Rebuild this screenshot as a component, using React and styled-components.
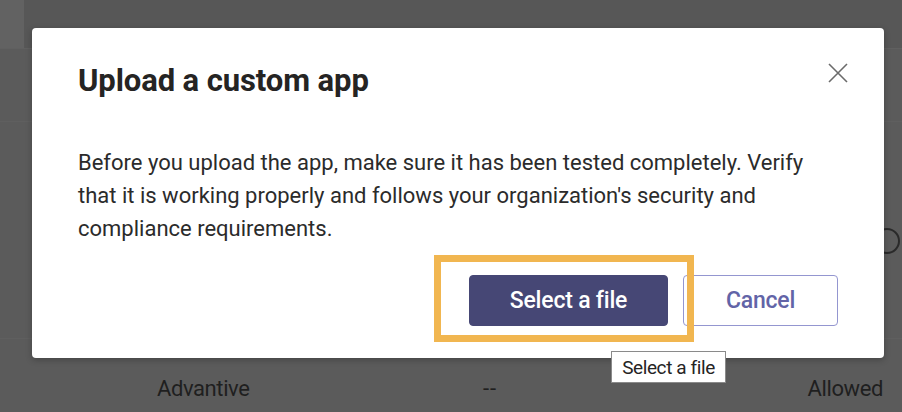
import React from "react";
import styled, { createGlobalStyle } from "styled-components";

const Global = createGlobalStyle`
  html, body { margin: 0; padding: 0; }
  body {
    width: 902px;
    height: 412px;
    overflow: hidden;
    background: #5b5b5b;
    font-family: Roboto, "Open Sans", sans-serif;
  }
`;

const Page = styled.div`
  position: relative;
  width: 902px;
  height: 412px;
  background: #5b5b5b;
  overflow: hidden;
`;

const Table = styled.div`
  display: flex;
  flex-direction: column;
  height: 100%;
`;

const TopStrip = styled.div`
  height: 48px;
  flex-shrink: 0;
  display: grid;
  grid-template-columns: 24px 1fr;
  border-bottom: 1px solid #606060;
`;

const StripCell = styled.div`
  background: ${(p) => (p.$light ? "#626262" : "#575757")};
`;

const TableRow = styled.div`
  height: ${(p) => p.$h}px;
  flex-shrink: 0;
  box-sizing: border-box;
  display: grid;
  grid-template-columns: 326px 1fr auto;
  padding: 0 19px 0 157px;
  align-items: center;
  color: #1f1f1f;
  font-size: 22px;
  border-bottom: ${(p) => (p.$line ? "1px solid #5f5f5f" : "none")};
`;

const Cell = styled.div`
  white-space: nowrap;
  letter-spacing: ${(p) => (p.$wide ? "1px" : "-0.4px")};
  font-variant-ligatures: none;
`;

const Ring = styled.div`
  grid-column: 3;
  margin-right: -17px;
  width: 22px;
  height: 22px;
  border: 2px solid #2a2a2a;
  border-radius: 50%;
`;

const Overlay = styled.div`
  position: absolute;
  inset: 0;
  padding: 28px 18px 0 32px;
  box-sizing: border-box;
`;

const Dialog = styled.div`
  width: 852px;
  height: 330px;
  box-sizing: border-box;
  background: #ffffff;
  border-radius: 4px;
  padding: 30px 46px 32px 46px;
  display: flex;
  flex-direction: column;
  box-shadow: 0 2px 6px rgba(0, 0, 0, 0.25);
`;

const Header = styled.div`
  display: flex;
  justify-content: space-between;
  align-items: flex-start;
`;

const Title = styled.h1`
  margin: 0;
  font-size: 31px;
  line-height: 46px;
  font-weight: 700;
  color: #252423;
  letter-spacing: -0.1px;
`;

const CloseButton = styled.button`
  border: none;
  background: none;
  padding: 0;
  margin: 4px -11px 0 0;
  width: 22px;
  height: 22px;
  display: flex;
  align-items: center;
  justify-content: center;
  cursor: pointer;
`;

const Body = styled.p`
  margin: 42px 0 0 0;
  font-size: 22px;
  line-height: 33px;
  color: #2b2b2b;
  letter-spacing: 0;
  width: 750px;
`;

const Footer = styled.div`
  margin-top: auto;
  display: flex;
  justify-content: flex-end;
  gap: 15px;
`;

const ButtonWrap = styled.div`
  position: relative;
  display: flex;
`;

const Button = styled.button`
  height: 51px;
  width: ${(p) => p.$w}px;
  box-sizing: border-box;
  border-radius: 4px;
  font-family: Roboto, "Open Sans", sans-serif;
  font-size: 23px;
  font-weight: 500;
  letter-spacing: -0.2px;
  cursor: pointer;
  background: ${(p) => (p.$primary ? "#464775" : "#ffffff")};
  color: ${(p) => (p.$primary ? "#ffffff" : "#6264a7")};
  border: 1.5px solid ${(p) => (p.$primary ? "#464775" : "#9496d0")};
`;

const Highlight = styled.div`
  position: absolute;
  left: -35px;
  top: -20px;
  right: -26px;
  bottom: -16px;
  border: 7px solid #f1b650;
  pointer-events: none;
  z-index: 2;
`;

const Tooltip = styled.div`
  position: absolute;
  left: 142px;
  top: 76px;
  width: 115px;
  height: 32px;
  box-sizing: border-box;
  background: #ffffff;
  border: 1px solid #8a8a8a;
  display: flex;
  align-items: center;
  justify-content: center;
  font-size: 19px;
  color: #252423;
  letter-spacing: -0.4px;
  white-space: nowrap;
  z-index: 3;
`;

export default function App() {
  return (
    <Page>
      <Global />
      <Table>
        <TopStrip>
          <StripCell $light />
          <StripCell />
        </TopStrip>
        <TableRow $h={73} $line />
        <TableRow $h={84} />
        <TableRow $h={70}>
          <Ring />
        </TableRow>
        <TableRow $h={63} $line />
        <TableRow $h={98}>
          <Cell>Advantive</Cell>
          <Cell $wide>--</Cell>
          <Cell>Allowed</Cell>
        </TableRow>
      </Table>
      <Overlay>
        <Dialog role="dialog">
          <Header>
            <Title>Upload a custom app</Title>
            <CloseButton aria-label="Close">
              <svg width="20" height="20" viewBox="0 0 20 20">
                <path d="M1 1 L19 19 M19 1 L1 19" stroke="#6b6b6b" strokeWidth="1.6" fill="none" />
              </svg>
            </CloseButton>
          </Header>
          <Body>
            Before you upload the app, make sure it has been tested completely. Verify that it is working properly and follows your organization's security and compliance requirements.
          </Body>
          <Footer>
            <ButtonWrap>
              <Button $primary $w={199}>Select a file</Button>
              <Highlight />
              <Tooltip>Select a file</Tooltip>
            </ButtonWrap>
            <Button $w={155}>Cancel</Button>
          </Footer>
        </Dialog>
      </Overlay>
    </Page>
  );
}
